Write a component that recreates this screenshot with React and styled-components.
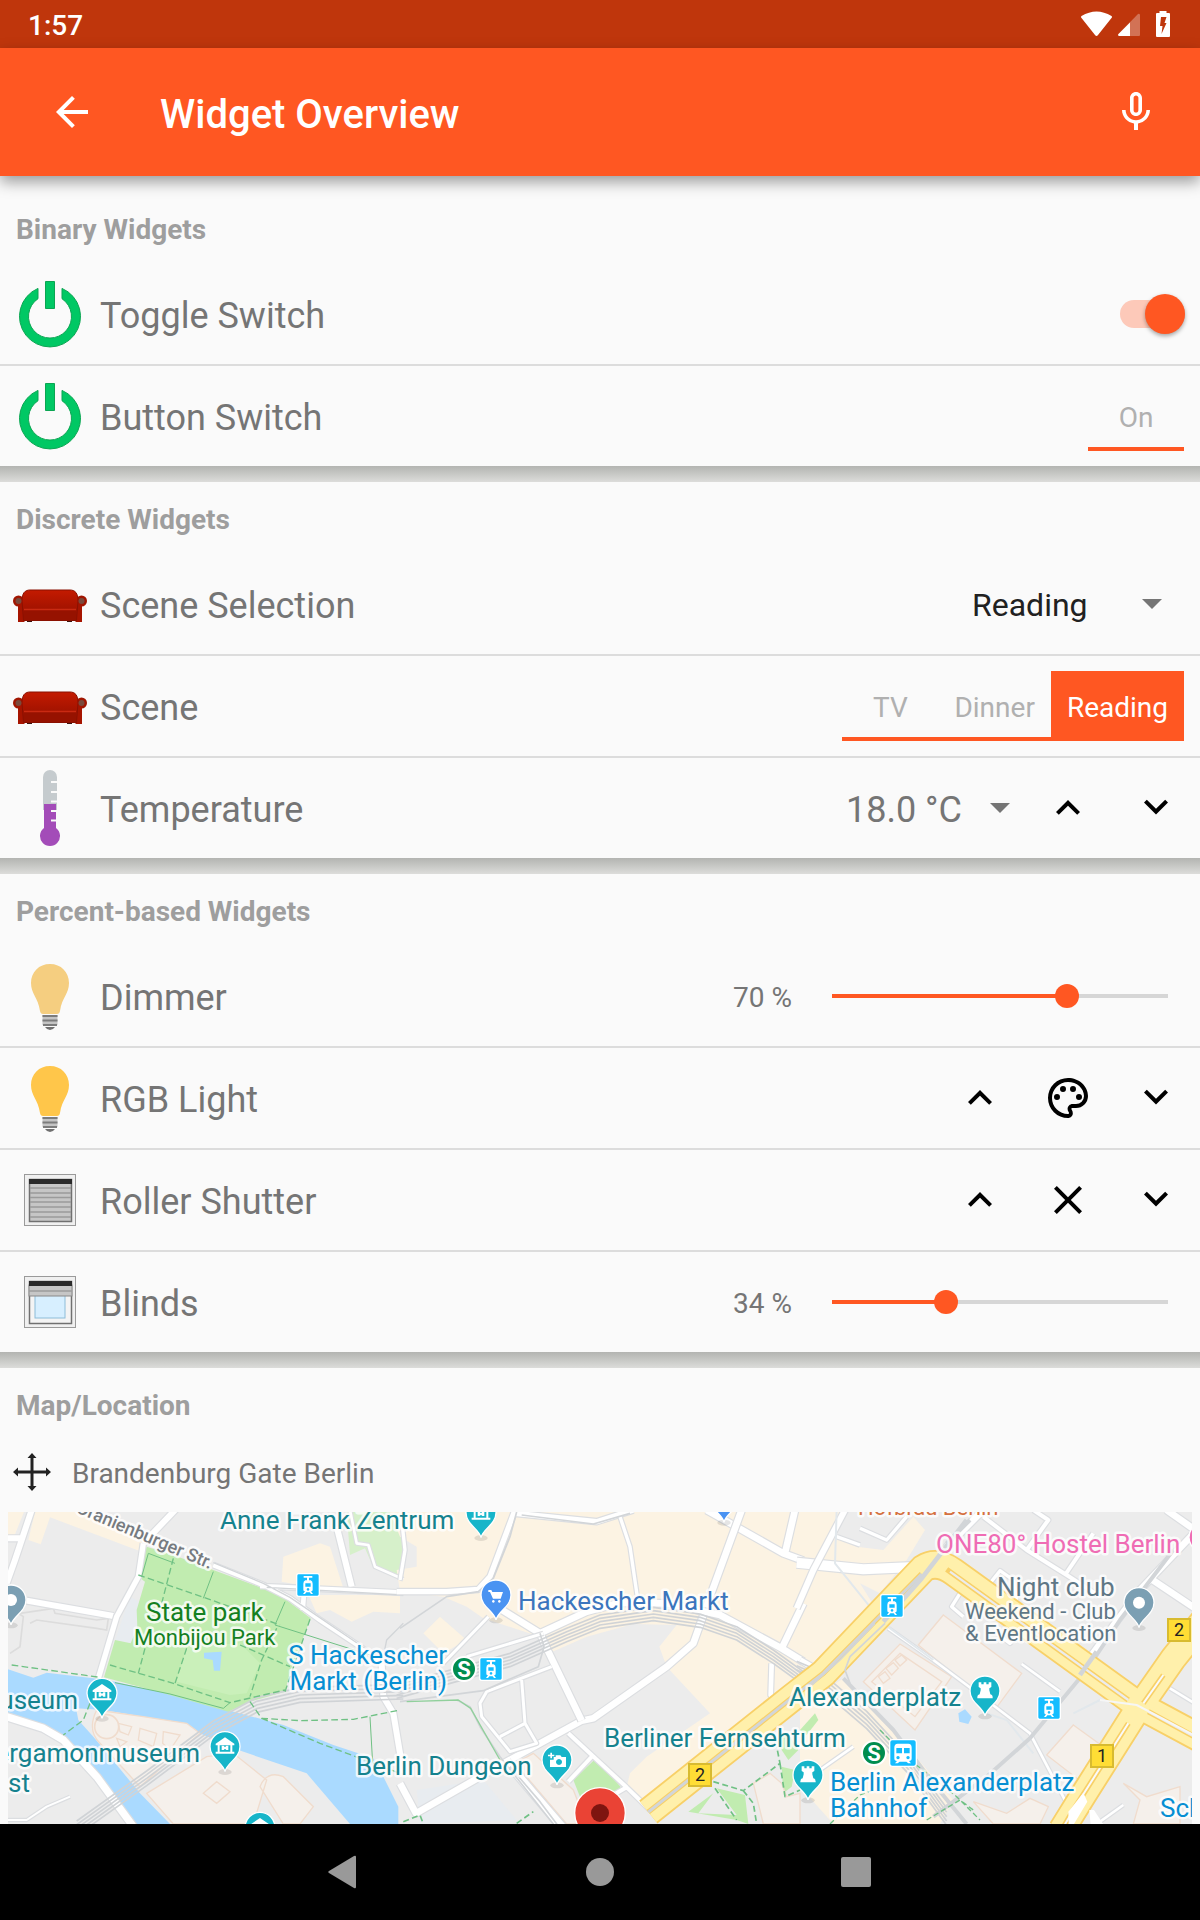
import React, { useState } from "react";
import styled, { createGlobalStyle } from "styled-components";

const accent = "#ff5722";

const GlobalStyle = createGlobalStyle`
  *, *::before, *::after { box-sizing: border-box; }
  body {
    margin: 0;
    background: #fafafa;
    font-family: Roboto, "Noto Sans", sans-serif;
    font-size: 28px;
    color: #757575;
  }
  button, input, select { font: inherit; color: inherit; }
  h1, h2, p { margin: 0; }
`;

const Screen = styled.div`
  display: flex;
  flex-direction: column;
  min-height: 100vh;
`;

const StatusBar = styled.div`
  display: flex;
  align-items: center;
  height: 48px;
  padding: 2px 24px 0 28px;
  background: #bf360c;
  color: #fff;
  font-weight: 500;
`;

const StatusIcons = styled.div`
  display: flex;
  align-items: center;
  gap: 4px;
  margin-left: auto;
  svg { display: block; }
`;

const AppBar = styled.header`
  position: relative;
  display: flex;
  align-items: center;
  height: 128px;
  padding: 0 16px;
  background: ${accent};
  color: #fff;
  box-shadow: 0 6px 14px rgba(0, 0, 0, 0.38);
`;

const BarButton = styled.button`
  display: grid;
  place-items: center;
  width: 96px;
  height: 96px;
  margin: 0;
  padding: 0;
  border: 0;
  background: none;
  cursor: pointer;
`;

const BackButton = styled(BarButton)`
  width: 112px;
`;

const Title = styled.h1`
  flex: 1;
  padding: 6px 0 0 32px;
  font-size: 40px;
  font-weight: 500;
  line-height: 48px;
`;

const Content = styled.main`
  flex: 1;
  display: flex;
  flex-direction: column;
  padding-top: 16px;
`;

const Frame = styled.section`
  & + &::before {
    content: "";
    display: block;
    height: 16px;
    background: linear-gradient(#b3b4b1, #dcdcda);
  }
`;

const FrameTitle = styled.h2`
  height: 72px;
  padding: 3px 16px 0;
  font-size: 28px;
  font-weight: 700;
  line-height: 69px;
  color: #9e9e9e;
`;

const Row = styled.div`
  display: flex;
  align-items: center;
  height: 100px;
  padding-left: 10px;
  & + & {
    height: 102px;
    border-top: 2px solid #dcdcdc;
  }
`;

const IconSlot = styled.span`
  display: block;
  width: 80px;
  height: 80px;
  margin-right: 10px;
  svg { display: block; }
`;

const RowLabel = styled.label`
  flex: 1;
  padding-top: 4px;
  font-size: 36px;
  line-height: 44px;
`;

const Controls = styled.div`
  display: flex;
  align-items: center;
  padding-right: ${(p) => (p.$inset ? "16px" : "0")};
`;

const IconButton = styled.button`
  display: grid;
  place-items: center;
  width: 88px;
  height: 88px;
  padding: 0;
  border: 0;
  background: none;
  color: #000;
  cursor: pointer;
`;

const Switch = styled.input`
  appearance: none;
  display: flex;
  align-items: center;
  justify-content: flex-end;
  width: 65px;
  height: 28px;
  margin: 0;
  border-radius: 14px;
  background: #fdc9b9;
  cursor: pointer;
  &::before {
    content: "";
    width: 40px;
    height: 40px;
    border-radius: 50%;
    background: ${accent};
    box-shadow: 0 2px 4px rgba(0, 0, 0, 0.35);
  }
  &:not(:checked) { justify-content: flex-start; background: #bdbdbd; }
  &:not(:checked)::before { background: #f1f1f1; }
`;

const SwitchBox = styled(Controls)`
  padding-right: 15px;
`;

const SegmentGroup = styled.div`
  display: flex;
`;

const Segment = styled.button`
  min-width: 96px;
  height: 70px;
  padding: 6px 16px 0;
  border: 0;
  border-bottom: 4px solid ${accent};
  background: ${(p) => (p.$active ? accent : "transparent")};
  color: ${(p) => (p.$active ? "#fff" : "#b0b0b0")};
  cursor: pointer;
`;

const SelectBox = styled.div`
  display: grid;
  align-items: center;
`;

const Select = styled.select`
  appearance: none;
  grid-area: 1 / 1;
  height: 72px;
  padding: 2px 96px 0 0;
  border: 0;
  background: none;
  font-size: 32px;
  color: #212121;
  cursor: pointer;
`;

const Caret = styled.span`
  width: 20px;
  height: 10px;
  background: #757575;
  clip-path: polygon(0 0, 100% 0, 50% 100%);
`;

const SelectCaret = styled(Caret)`
  grid-area: 1 / 1;
  justify-self: end;
  margin-right: 22px;
  pointer-events: none;
`;

const Setpoint = styled.button`
  display: flex;
  align-items: center;
  gap: 28px;
  padding: 0 14px 0 0;
  border: 0;
  background: none;
  font-size: 36px;
  line-height: 44px;
  cursor: pointer;
`;

const SetpointValue = styled.span`
  padding-top: 4px;
`;

const Percent = styled.output`
  padding: 3px 28px 0 0;
  line-height: 36px;
`;

const Range = styled.input`
  appearance: none;
  width: 360px;
  height: 48px;
  margin: 0 20px 0 0;
  background:
    linear-gradient(${accent}, ${accent}) 12px 50% / calc((100% - 24px) * var(--fill)) 4px no-repeat,
    linear-gradient(#d6d6d6, #d6d6d6) 12px 50% / calc(100% - 24px) 4px no-repeat;
  cursor: pointer;
  &::-webkit-slider-thumb {
    appearance: none;
    width: 24px;
    height: 24px;
    border-radius: 50%;
    background: ${accent};
  }
`;

const MapHead = styled.div`
  display: flex;
  align-items: center;
  gap: 20px;
  height: 72px;
  padding: 0 12px 8px;
  svg { display: block; }
`;

const MapCaption = styled.p`
  padding-top: 3px;
  line-height: 36px;
`;

const MapFrame = styled.div`
  height: 312px;
  margin: 0 8px;
  overflow: hidden;
  svg { display: block; width: 100%; height: 100%; }
  text { font-family: Roboto, "Noto Sans", sans-serif; }
`;

const NavBar = styled.nav`
  display: flex;
  justify-content: center;
  height: 96px;
  background: #000;
`;

const NavButton = styled.button`
  display: grid;
  place-items: center;
  width: 256px;
  padding: 0;
  border: 0;
  background: none;
  color: #999;
  cursor: pointer;
`;

/* ---------- glyphs ---------- */

const Glyph = ({ d, size = 48 }) => (
  <svg width={size} height={size} viewBox="0 0 24 24" fill="currentColor" aria-hidden="true">
    <path d={d} />
  </svg>
);

const paths = {
  back: "M20 11H7.83l5.59-5.59L12 4l-8 8 8 8 1.41-1.41L7.83 13H20v-2z",
  mic: "M12 14c1.66 0 3-1.34 3-3V5c0-1.66-1.34-3-3-3S9 3.34 9 5v6c0 1.66 1.34 3 3 3zm-1.2-9.1c0-.66.54-1.2 1.2-1.2s1.2.54 1.2 1.2l-.01 6.2c0 .66-.53 1.2-1.19 1.2s-1.2-.54-1.2-1.2V4.9zM17.2 11c0 2.9-2.4 5.1-5.2 5.1S6.8 13.9 6.8 11H5c0 3.41 2.72 6.23 6 6.72V21h2v-3.28c3.28-.48 6-3.3 6-6.72h-1.8z",
  up: "M7.41 15.41L12 10.83l4.59 4.58L18 14l-6-6-6 6z",
  down: "M7.41 7.84L12 12.42l4.59-4.58L18 9.25l-6 6-6-6z",
  close: "M19 6.41L17.59 5 12 10.59 6.41 5 5 6.41 10.59 12 5 17.59 6.41 19 12 13.41 17.59 19 19 17.59 13.41 12z",
  palette:
    "M12 22A10 10 0 0 1 2 12 10 10 0 0 1 12 2c5.5 0 10 4 10 9a6 6 0 0 1-6 6h-1.8c-.3 0-.5.2-.5.5 0 .1.1.2.1.3.4.5.6 1.1.6 1.7.1 1.4-1 2.5-2.4 2.5m0-18a8 8 0 0 0-8 8 8 8 0 0 0 8 8c.3 0 .5-.2.5-.5 0-.2-.1-.3-.1-.4-.4-.5-.6-1-.6-1.6 0-1.4 1.1-2.5 2.5-2.5H16a4 4 0 0 0 4-4c0-3.9-3.6-7-8-7M6.5 10a1.5 1.5 0 1 1 0 3 1.5 1.5 0 0 1 0-3m3-4a1.5 1.5 0 1 1 0 3 1.5 1.5 0 0 1 0-3m5 0a1.5 1.5 0 1 1 0 3 1.5 1.5 0 0 1 0-3m3 4a1.5 1.5 0 1 1 0 3 1.5 1.5 0 0 1 0-3",
};

const Art = ({ children }) => (
  <svg width="80" height="80" viewBox="0 0 80 80" aria-hidden="true">{children}</svg>
);

const PowerArt = () => (
  <Art>
    <g fill="#00c864" stroke="#0ba552" strokeWidth="1">
      <path d="M28 14.400A30.500 30.500 0 1 0 52 14.400V24.700A21.500 21.500 0 1 1 28 24.700Z" />
      <path d="M35.500 7.500H44.500V34.500H35.500Z" />
    </g>
  </Art>
);

const SofaArt = () => (
  <Art>
    <defs>
      <linearGradient id="sofaBack" x1="0" y1="0" x2="0" y2="1">
        <stop offset="0" stopColor="#c41a00" />
        <stop offset="1" stopColor="#8f0f00" />
      </linearGradient>
    </defs>
    <path d="M17 54h5v4h-5zM57 54h5v4h-5z" fill="#3a1410" />
    <circle cx="8.500" cy="37" r="5.500" fill="#a01500" />
    <circle cx="71.500" cy="37" r="5.500" fill="#a01500" />
    <path d="M8 36h6.500v22H8zM65.500 36h6.500v22h-6.500z" fill="#a61400" />
    <path d="M12 37C12 29 15 26 20 26H60C65 26 68 29 68 37L66.500 56.500H13.500Z" fill="url(#sofaBack)" stroke="#8a1000" strokeWidth="1" />
    <path d="M14 46V56H66V46Z" fill="#961200" />
    <path d="M14 45.500H66" stroke="#c92a12" strokeWidth="1.500" />
    <circle cx="8.500" cy="37" r="3" fill="#7a4a3c" />
    <circle cx="71.500" cy="37" r="3" fill="#7a4a3c" />
  </Art>
);

const ThermometerArt = () => (
  <Art>
    <path d="M33 42V9a7 7 0 0 1 14 0V42Z" fill="#c5cbce" />
    <path d="M34 36H46V60A10 10 0 1 1 34 60Z" fill="#a34cb8" />
    <path d="M41 14H48M41 24H48M41 33.500H48M41 43H48M41 52.500H48" stroke="#fafafa" strokeWidth="2" />
  </Art>
);

const BulbArt = ({ color }) => (
  <Art>
    <path d="M40 8C51 8 59 16 59 27C59 38 52 41 50 55Q49.500 58 47 58H33Q30.500 58 30 55C28 41 21 38 21 27C21 16 29 8 40 8Z" fill={color} />
    <path d="M32.500 59H47.500V69H32.500Z" fill="#c4c4c4" />
    <path d="M32.500 60H47.500M32.500 64.500H47.500M33 69H47" stroke="#7c7c7c" strokeWidth="2" />
    <path d="M35 71H45Q43 74 40 74T35 71Z" fill="#707070" />
  </Art>
);

const WindowArt = ({ open }) => (
  <Art>
    <rect x="14.500" y="14.500" width="51" height="51" fill="#f0f0f0" stroke="#9a9a9a" />
    <rect x="19.500" y="19.500" width="42" height="42" fill={open ? "#f4f4f4" : "#c6c6c6"} stroke="#707070" strokeWidth="1.500" />
    {open && <rect x="25" y="27" width="30" height="29" fill="#d7efff" stroke="#8cbcd8" />}
    {open && <rect x="19" y="23" width="43" height="11" fill="#c6c6c6" stroke="#888" />}
    <rect x="19" y="19" width="43" height="5" fill="#2a2a2a" />
    <path
      d={open ? "M19 29H62" : "M20 28H61M20 33H61M20 37.500H61M20 42H61M20 47H61M20 52H61M20 57H61"}
      stroke="#9b9b9b"
      strokeWidth="1.500"
    />
  </Art>
);

/* ---------- map ---------- */

const Road = ({ d, w = 18 }) => (
  <>
    <path d={d} stroke="#dcdee1" strokeWidth={w + 7} />
    <path d={d} stroke="#fff" strokeWidth={w} />
  </>
);

const Rail = ({ d, n = 3, gap = 12 }) =>
  Array.from({ length: n }, (_, i) => (
    <path key={i} d={d} stroke="#d0d3d6" strokeWidth="5" transform={`translate(0 ${(i - (n - 1) / 2) * gap})`} />
  ));

const PinGlyphs = {
  museum: (
    <>
      <path d="M-28 -9L0 -28 28 -9V-4H-28ZM-28 15H28V21H-28Z" fill="#fff" />
      <path d="M-19 -5V17M19 -5V17" stroke="#fff" strokeWidth="6" />
      <path d="M-10 10V-3H-4L0 2 4 -3H10V10H4L0 6 -4 10Z" fill="#fff" />
    </>
  ),
  cart: (
    <path d="M-23 -15h9l3 6h32l-7 20h-23l-9 -20h-5zM-8 15a4 4 0 1 0 .1 0M10 15a4 4 0 1 0 .1 0" fill="#fff" />
  ),
  camera: (
    <path fillRule="evenodd" d="M-4 -14h14l4 5h13v30h-48v-22h11v-8h6zM6 -3a9 9 0 1 0 .1 0M-27 -16h7v-6h5v6h7v5h-7v6h-5v-6h-7z" fill="#fff" />
  ),
  tower: <path d="M-19 -26h8v6h7v-6h8v6h7v-6h8v14l-6 4v6l3 12q8 2 7 12h-46q-1 -10 7 -12l3 -12v-6l-6 -4z" fill="#fff" />,
  dot: <circle r="18" fill="#fff" />,
};

const Pin = ({ x, y, color = "#17b5c9", glyph = "museum" }) => (
  <g transform={`translate(${x} ${y})`}>
    <ellipse cx="0" cy="76" rx="20" ry="9" fill="#000" opacity=".1" />
    <path d="M0 75C-5 48-45 36-45 0A45 45 0 1 1 45 0C45 36 5 48 0 75Z" fill={color} stroke="#fff" strokeWidth="4" />
    {PinGlyphs[glyph]}
  </g>
);

const Tram = ({ x, y }) => (
  <g transform={`translate(${x} ${y})`}>
    <rect x="-34" y="-34" width="68" height="68" rx="6" fill="#14bdff" stroke="#fff" strokeWidth="4" />
    <path
      fillRule="evenodd"
      d="M-13 -27H13V-22H3V-14H8Q14 -12 14 -4V14Q14 19 9 19L15 27H9L5 22H-5L-9 27H-15L-9 19Q-14 19 -14 14V-4Q-14 -12 -8 -14H-3V-22H-13ZM-8 -5V5H8V-5ZM0 9a4 4 0 1 0 .1 0"
      fill="#fff"
    />
  </g>
);

const Park = (props) => <path fill="#c1ecb0" {...props} />;
const Shop = (props) => <path fill="#fcf3e3" {...props} />;
const Plot = (props) => <path fill="#f5f0eb" stroke="#f0dccd" strokeWidth="4" {...props} />;

const Label = ({ x, y, size = 26, color = "#15828e", end, children, ...rest }) => (
  <text
    x={x}
    y={y}
    fontSize={size}
    fill={color}
    textAnchor={end ? "end" : "start"}
    stroke="#fff"
    strokeOpacity=".8"
    strokeWidth="5"
    strokeLinejoin="round"
    paintOrder="stroke"
    {...rest}
  >
    {children}
  </text>
);

const RouteBadge = ({ x, y, children }) => (
  <g transform={`translate(${x} ${y})`}>
    <rect x="-11" y="-11" width="22" height="22" fill="#ffdd35" stroke="#d8bb30" strokeWidth="2" />
    <text y="6" fontSize="18" fill="#222" textAnchor="middle">{children}</text>
  </g>
);

const SBahn = ({ x, y }) => (
  <g transform={`translate(${x} ${y})`}>
    <circle r="12" fill="#008d4f" stroke="#fff" strokeWidth="2" />
    <text y="8" fontSize="22" fontWeight="700" fill="#fff" textAnchor="middle">S</text>
  </g>
);

const west = "scale(.333333) translate(-24 -396)";
const middle = "scale(.333333) translate(1176 -36)";
const east = "scale(.333333) translate(2376 -36)";

const highwayA = "M-455 936L-20 590L70 520L370 205Q410 180 460 215L1010 612L1220 725";
const highwayB = "M1220 350L1120 475L1005 640L850 885L785 990";

const BerlinMap = () => (
  <svg viewBox="0 0 1184 312" preserveAspectRatio="xMidYMid slice" role="img" aria-label="Map of Berlin">
    <rect width="1184" height="312" fill="#ececec" />

    <g transform={west}>
      <Shop d="M24 396H72L42 470H24ZM105 396H240L435 475 425 515 150 412 122 493 85 480ZM850 530L960 490 990 500 1035 640 845 605ZM925 645H1200V700L1120 695 1055 725 990 690 950 700Z" />
      <Park d="M1040 396H1210V590L1120 562 1095 505 1050 525Z" fill="#d6f0ca" />
      <path d="M440 690L410 660 390 650 345 780 392 790Z" fill="#e8ecf0" />
      <path d="M24 868L100 893 140 878 280 895 345 905 520 945 690 992 850 1035 1000 1095 1120 1135 1150 1190 1195 1280V1332H1050L920 1180 700 1105 590 1055 500 1022 400 1005 310 990 228 985 235 1020 280 1070 330 1130 420 1240 510 1332H400L320 1240 240 1110 180 1060 24 1005Z" fill="#aadaff" />
      <Park d="M440 500L520 525 640 570 790 625 860 660 932 715 872 870 855 935 750 965 685 995 510 945 312 892 345 780 392 790 412 740 410 690 435 605 412 588Z" />
      <path d="M560 800L720 790 780 850 740 940 690 945 530 905Z" fill="#caf0ba" />
      <path d="M612 818L665 815 660 872H642L638 840 612 835Z" fill="#aadaff" />
      <Plot d="M290 990Q260 1050 300 1090L420 1220 600 1060 560 1030 430 1010Z" />
      <Plot d="M440 1240L620 1130 700 1120 800 1200 760 1332H520ZM780 1220Q800 1170 850 1190L940 1280 900 1332H850Z" />
      <Plot d="M355 1030L395 1040 385 1065 360 1055ZM420 1045L470 1060 460 1100 415 1080ZM490 1055L540 1065 510 1110 488 1090ZM350 1075L380 1085 360 1100ZM610 1240L650 1205 690 1235 650 1270Z" />
      <circle cx="320" cy="1040" r="36" fill="#f5f0eb" stroke="#f0dccd" strokeWidth="5" />
      <path d="M40 690L70 710 60 800 30 820M60 700L160 685 165 700 290 720 325 715 320 750 290 745 110 720 90 730" fill="none" stroke="#dcdcdc" strokeWidth="5" />
    </g>

    <g transform={middle}>
      <Shop d="M-30 36H1210V560L980 745 900 800 780 890 740 925 680 860 690 820 740 770 930 640 800 500 778 440 830 375 700 372 560 410 435 465 420 410 250 355 200 320 130 290 0 275-10 210 50 200V140L0 110Z" />
      <path d="M0 340H120L230 380 340 440 130 500 0 560Z" fill="#ececec" />
      <Shop d="M70 400L120 350 200 420 130 460Z" />
      <Park d="M520 840L585 778 662 860 640 890 540 890Z" />
      <Plot d="M345 790L400 760 520 870 560 972H500Z" />
      <path d="M50 870L250 840 350 960 60 972Z" fill="#e8ecf0" />
      <Park d="M865 935L940 880 895 940 1010 945 950 865 1035 885 1045 972 1010 960ZM1125 720L1165 700 1195 750 1165 780ZM1145 800L1185 810 1175 860 1150 880Z" />
      <Plot d="M1060 850L1110 820 1145 850 1160 890 1200 880V972H1090Z" />
    </g>

    <g transform={east}>
      <Shop d="M-30 36H130L100 110 170 140 250 150 340 50 375 90 320 180 240 280 180 250 230 330 150 440 0 600Z" />
      <Shop d="M0 620L130 535 200 600 460 900 420 972H100L0 860Z" />
      <Plot d="M430 345L665 520 590 622 520 570 355 435ZM300 432L455 530 345 690 190 545Z" />
      <Plot d="M300 460L425 545 345 650 215 545ZM820 675L910 740 850 850 740 765ZM520 905L620 940 690 895 745 920 720 972H580ZM970 850L1040 890 1140 860V972H1000L1020 900Z" />
      <path d="M235 530L255 515 270 535 250 550ZM258 505L280 488 295 505 275 525ZM285 480L305 465 320 480 300 498Z" fill="none" stroke="#f0dccd" strokeWidth="4" />
      <path d="M475 640L495 628 515 650 505 672 478 665Z" fill="#aadaff" />
      <Park d="M0 690L45 640 55 660 20 705Z" />
    </g>

    <g fill="none" strokeLinejoin="round">
      <g transform={west}>
        <Road d="M95 390L45 540 20 610M20 475H60M80 662L340 708M430 490L530 385M1010 440L1055 620" />
        <Road d="M430 490L415 590 350 710 295 895" w={16} />
        <Road d="M20 1010L130 1045 190 1080 290 1190 400 1340" w={22} />
        <Road d="M640 555L790 615 870 655 960 720 1080 800 1150 850M780 618L1210 638M912 640L908 690" w={14} />
        <Road d="M1050 390L1070 490 1105 495 1125 560 1210 598" w={8} />
        <Road d="M1145 850L1150 950 1180 1000 1210 1180" w={18} />
        <Road d="M24 1320L80 1320 140 1280 210 1250" w={6} />
        <path d="M640 548L790 610 870 652 1080 795 1150 840M800 622L1210 645M1150 830L1160 780 1210 730" stroke="#d2d5d8" strokeWidth="4" />
        <Rail d="M230 1345L440 1195 640 1045 770 975 900 945 1210 935" n={5} gap={11} />
        <g stroke="#6fc184" strokeWidth="4">
          <path d="M415 585L620 655 840 735M330 855L520 910 690 968 855 930M520 535L485 670M435 805L415 880M560 805L525 910M930 718L855 935M830 745L785 840 750 950M720 795L870 860M35 855L300 892M270 970L250 1020 190 1065M750 965L785 1015 900 1022 1060 1018 1200 990M785 1015L960 1090 1200 1180" strokeDasharray="20 10" />
          <path d="M445 520L425 590M445 520L525 550M640 575L610 655M855 665L825 735L1110 825M345 908L510 942 670 985 690 968M1110 1010L1118 1150" strokeWidth="3" />
        </g>
      </g>

      <g transform={middle}>
        <Road d="M345 30L270 230 235 268 140 275-10 275M345 40L590 65 700 30" w={16} />
        <Road d="M5 60L15 150 0 240M660 50L690 140 712 290" w={10} />
        <Road d="M920 30L1150 160 1210 182M1185 30L1155 160" w={20} />
        <Road d="M1025 30L930 290 880 430 800 500 580 655 545 662 320 785 48 940 0 850" w={20} />
        <Road d="M290 320L420 400 445 455 545 662M420 400L560 335 660 308 800 310 960 345 1145 445 1210 485M1210 310L1145 445" w={20} />
        <Road d="M265 350L130 490M200 470L430 400M455 500L260 575 240 610 245 650 330 755 410 730 375 670 300 710M365 540L375 670" w={9} />
        <Road d="M1115 490L1112 585 1130 612" w={14} />
        <Road d="M505 700L680 862 750 930M580 765L505 845M680 862L640 885" w={12} />
        <Road d="M320 785L400 880 490 985" w={24} />
        <path d="M350 36L330 110 280 235 235 275 140 290 0 385M420 400L432 440 415 500 250 572 0 605M170 600L210 620 240 680 300 770 470 985M330 800L420 905 480 985M365 45L580 72 690 40" stroke="#d2d5d8" strokeWidth="5" />
        <path d="M20 605L175 600 212 625 300 780" stroke="#91d09c" strokeWidth="4" />
        <Rail d="M-10 575L330 480 500 405 600 365 760 342 900 362 1010 400 1120 470 1210 535" n={5} gap={10} />
        <path d="M940 845L1030 872 1140 790 1130 740M945 865L1010 960M1030 872L1060 910 1070 972M1140 790L1155 890 1200 870M10 965L60 945 70 972M350 970L400 935" stroke="#6fc184" strokeWidth="5" strokeDasharray="18 10" />
      </g>

      <g transform={east}>
        <Road d="M-10 188L190 208 360 200" w={30} />
        <Road d="M-10 325L40 210 135 30M0 480L60 515" w={18} />
        <Road d="M550 30L450 130 400 190M1210 70L1020 270 960 350 850 500M1100 30L1185 90M1050 235L1200 335" w={20} />
        <Road d="M550 50L680 150 800 225 900 290M680 150L745 60 700 30M795 225L880 100" w={12} />
        <Road d="M110 110L180 135M180 85L260 120 320 50M570 250L600 212 640 240 650 300M480 280L455 320 490 350M590 400L630 430 660 400" w={10} />
        <Road d="M265 385L400 480 500 555 690 700 800 910M665 492L780 575M60 810L160 740M1110 565L1200 620M890 972L970 915" w={8} />
        <path d="M110 30L105 190 250 370 400 480M560 640L620 660 700 760 M820 640L900 600 970 610" stroke="#e2e8ec" strokeWidth="6" />
        <Rail d="M-10 510L60 540 200 660 330 800 440 950" n={5} gap={13} />
        <path d="M130 535L280 690 400 850 500 972M690 715L560 830 400 950M510 60L440 130M1120 150L960 360 860 510 690 715" stroke="#d2d5d8" strokeWidth="12" />
        <path d="M240 690L330 780 470 890 540 960M90 972L180 885 220 870M380 960L480 900 520 930" stroke="#6fc184" strokeWidth="4" strokeDasharray="16 9" />
        <g strokeLinejoin="miter">
          <path d={highwayA} stroke="#f8d068" strokeWidth="88" />
          <path d={highwayB} stroke="#f8d068" strokeWidth="84" />
          <path d={highwayA} stroke="#fff0ab" strokeWidth="77" />
          <path d={highwayB} stroke="#fff0ab" strokeWidth="73" />
          <path d="M-455 936L-20 590L70 520L365 222M440 208L985 600M1045 635L1220 730M1090 525L1030 610M985 670L820 930 785 990" stroke="#f8d068" strokeWidth="16" />
          <path d="M-455 936L-20 590L70 520L365 222" stroke="#d2d5d8" strokeWidth="9" />
          <path d="M450 215L985 600M1045 635L1220 730" stroke="#ececec" strokeWidth="7" />
          <path d="M1090 525L1030 610M985 670L820 930 785 990" stroke="#fafafa" strokeWidth="6" />
        </g>
        <path d="M250 365L365 235 500 60M840 525L890 455" stroke="#d2d5d8" strokeWidth="14" />
        <path d="M805 935L850 878 862 905 822 972H806ZM868 930L882 930 912 976H872Z" fill="#fff" />
        <path d="M900 600L1010 615 1200 715" stroke="#f6f6f6" strokeWidth="6" />
        <path d="M255 370L150 470 135 510 150 550M225 370L120 480 30 560" stroke="#d2d5d8" strokeWidth="5" />
      </g>
    </g>

    <Label x="67" y="0" size={18} color="#767b80" fontWeight="500" transform="rotate(23 67 0)">Oranienburger Str.</Label>
    <Label x="212" y="17">Anne Frank Zentrum</Label>
    <Label x="138" y="109" color="#14801f">State park</Label>
    <Label x="126" y="133" size={22} color="#14801f">Monbijou Park</Label>
    <Label x="439" y="152" color="#078fd3" end>S Hackescher</Label>
    <Label x="439" y="178" color="#078fd3" end>Markt (Berlin)</Label>
    <Label x="70" y="197" end>useum</Label>
    <Label x="192" y="250" end>ergamonmuseum</Label>
    <Label x="0" y="280">st</Label>
    <Label x="348" y="263">Berlin Dungeon</Label>
    <Label x="510" y="98" color="#3b75bd">Hackescher Markt</Label>
    <Label x="596" y="235">Berliner Fernsehturm</Label>
    <Label x="781" y="194">Alexanderplatz</Label>
    <Label x="850" y="3" size={22} color="#d5713f">Hofbräu Berlin</Label>
    <Label x="928" y="41" color="#ef6cb4">ONE80° Hostel Berlin</Label>
    <Label x="989" y="84" color="#5f7785">Night club</Label>
    <Label x="957" y="107" size={22} color="#5f7785">Weekend - Club</Label>
    <Label x="957" y="129" size={22} color="#5f7785">&amp; Eventlocation</Label>
    <Label x="822" y="279" color="#078fd3">Berlin Alexanderplatz</Label>
    <Label x="822" y="305" color="#078fd3">Bahnhof</Label>
    <Label x="1152" y="305" color="#078fd3">Sch</Label>

    <g transform={west}>
      <Pin x={33} y={660} color="#7b9fb3" glyph="dot" />
      <Pin x={306} y={940} />
      <Pin x={675} y={1100} />
      <Pin x={780} y={1342} />
      <Tram x={924} y={615} />
    </g>
    <g transform={middle}>
      <Pin x={243} y={38} />
      <Pin x={288} y={285} color="#4a93f2" glyph="cart" />
      <Pin x={471} y={780} glyph="camera" />
      <Pin x={972} y={-8} color="#4a93f2" glyph="cart" />
      <Tram x={273} y={507} />
      <circle cx="600" cy="939" r="76" fill="#ea4335" stroke="#fff" strokeWidth="4" />
      <circle cx="600" cy="939" r="27" fill="#7f1510" />
    </g>
    <g transform={east}>
      <Pin x={555} y={573} glyph="tower" />
      <Pin x={24} y={825} glyph="tower" />
      <Pin x={1017} y={308} color="#7b9fb3" glyph="dot" />
      <Tram x={276} y={318} />
      <Tram x={747} y={624} />
      <circle cx="1212" cy="112" r="45" fill="#ef6cb4" stroke="#fff" strokeWidth="4" />
      <g transform="translate(309 759)">
        <rect x="-40" y="-40" width="80" height="80" rx="8" fill="#14bdff" stroke="#fff" strokeWidth="4" />
        <path fillRule="evenodd" d="M-16 -28H16Q26 -28 26 -16V16Q26 24 18 24L24 31H16L10 26H-10L-16 31H-24L-18 24Q-26 24 -26 16V-16Q-26 -28 -16 -28ZM-20 -15V1H-3V-15ZM3 -15V1H20V-15ZM-15 9a5 5 0 1 0 .1 0M15 9a5 5 0 1 0 .1 0" fill="#fff" />
      </g>
    </g>
    <SBahn x="456" y="157" />
    <SBahn x="866" y="241" />
    <RouteBadge x="692" y="263">2</RouteBadge>
    <RouteBadge x="1171" y="118">2</RouteBadge>
    <RouteBadge x="1094" y="244">1</RouteBadge>
  </svg>
);

/* ---------- widgets ---------- */

const UpButton = () => (
  <IconButton aria-label="Up"><Glyph d={paths.up} /></IconButton>
);
const DownButton = () => (
  <IconButton aria-label="Down"><Glyph d={paths.down} /></IconButton>
);

const Widget = ({ icon, label, htmlFor, children }) => (
  <Row>
    <IconSlot>{icon}</IconSlot>
    <RowLabel as={htmlFor ? "label" : "span"} htmlFor={htmlFor}>{label}</RowLabel>
    {children}
  </Row>
);

const SliderWidget = ({ icon, label, id, initial }) => {
  const [value, setValue] = useState(initial);
  return (
    <Widget icon={icon} label={label} htmlFor={id}>
      <Controls>
        <Percent htmlFor={id}>{value} %</Percent>
        <Range
          id={id}
          type="range"
          min="0"
          max="100"
          value={value}
          onChange={(e) => setValue(Number(e.target.value))}
          style={{ "--fill": value / 100 }}
        />
      </Controls>
    </Widget>
  );
};

const scenes = ["TV", "Dinner", "Reading"];

export default function App() {
  const [scene, setScene] = useState("Reading");
  return (
    <Screen>
      <GlobalStyle />
      <StatusBar>
        <span>1:57</span>
        <StatusIcons>
          <svg width="34" height="28" viewBox="0 0 34 28" fill="#fff" aria-hidden="true">
            <path d="M1.500 5Q16.500 -4 31.500 5Q32.500 6 31.500 7L18 24Q16.500 26 15 24L1.500 7Q.5 6 1.500 5Z" />
          </svg>
          <svg width="22" height="28" viewBox="0 0 22 28" fill="#fff" aria-hidden="true">
            <path d="M22 4V24Q22 25 21 25H1Q-.5 24.500.5 23L20 3Q21.500 2 22 4Z" opacity=".3" />
            <path d="M12 11.500V25H1Q-.5 24.500.5 23Z" />
          </svg>
          <svg width="32" height="28" viewBox="0 0 32 28" fill="#fff" aria-hidden="true">
            <path fillRule="evenodd" d="M15.500 0H22.500V2H25Q26 2 26 3V25Q26 26 25 26H13Q12 26 12 25V3Q12 2 13 2H15.500ZM17 6L16 15H18.500L17.500 23L22.500 12H20.500L22.500 6Z" />
          </svg>
        </StatusIcons>
      </StatusBar>
      <AppBar>
        <BackButton aria-label="Back"><Glyph d={paths.back} /></BackButton>
        <Title>Widget Overview</Title>
        <BarButton aria-label="Voice input"><Glyph d={paths.mic} /></BarButton>
      </AppBar>

      <Content>
        <Frame>
          <FrameTitle>Binary Widgets</FrameTitle>
          <Widget icon={<PowerArt />} label="Toggle Switch" htmlFor="toggle">
            <SwitchBox><Switch id="toggle" type="checkbox" role="switch" defaultChecked /></SwitchBox>
          </Widget>
          <Widget icon={<PowerArt />} label="Button Switch">
            <Controls $inset><Segment>On</Segment></Controls>
          </Widget>
        </Frame>

        <Frame>
          <FrameTitle>Discrete Widgets</FrameTitle>
          <Widget icon={<SofaArt />} label="Scene Selection" htmlFor="scene">
            <Controls $inset>
              <SelectBox>
                <Select id="scene" value={scene} onChange={(e) => setScene(e.target.value)}>
                  {scenes.map((s) => <option key={s}>{s}</option>)}
                </Select>
                <SelectCaret />
              </SelectBox>
            </Controls>
          </Widget>
          <Widget icon={<SofaArt />} label="Scene">
            <Controls $inset>
              <SegmentGroup role="group" aria-label="Scene">
                {scenes.map((s) => (
                  <Segment key={s} $active={s === scene} aria-pressed={s === scene} onClick={() => setScene(s)}>{s}</Segment>
                ))}
              </SegmentGroup>
            </Controls>
          </Widget>
          <Widget icon={<ThermometerArt />} label="Temperature">
            <Controls>
              <Setpoint><SetpointValue>18.0 °C</SetpointValue><Caret /></Setpoint>
              <UpButton />
              <DownButton />
            </Controls>
          </Widget>
        </Frame>

        <Frame>
          <FrameTitle>Percent-based Widgets</FrameTitle>
          <SliderWidget icon={<BulbArt color="#f5ce80" />} label="Dimmer" id="dimmer" initial={70} />
          <Widget icon={<BulbArt color="#ffc64a" />} label="RGB Light">
            <Controls>
              <UpButton />
              <IconButton aria-label="Pick colour"><Glyph d={paths.palette} /></IconButton>
              <DownButton />
            </Controls>
          </Widget>
          <Widget icon={<WindowArt />} label="Roller Shutter">
            <Controls>
              <UpButton />
              <IconButton aria-label="Stop"><Glyph d={paths.close} /></IconButton>
              <DownButton />
            </Controls>
          </Widget>
          <SliderWidget icon={<WindowArt open />} label="Blinds" id="blinds" initial={34} />
        </Frame>

        <Frame>
          <FrameTitle>Map/Location</FrameTitle>
          <MapHead>
            <svg width="40" height="40" viewBox="0 0 40 40" aria-hidden="true">
              <path d="M20 4V36M4 20H36" stroke="#222" strokeWidth="3" />
              <path d="M20 1L24.500 6H15.500ZM20 39L24.500 34H15.500ZM1 20L6 15.500V24.500ZM39 20L34 15.500V24.500Z" fill="#222" />
            </svg>
            <MapCaption>Brandenburg Gate Berlin</MapCaption>
          </MapHead>
          <MapFrame><BerlinMap /></MapFrame>
        </Frame>
      </Content>

      <NavBar>
        <NavButton aria-label="Back">
          <svg width="32" height="36" viewBox="0 0 32 36" fill="currentColor" aria-hidden="true">
            <path d="M1 17Q-.5 18 1 19L26 34Q28 35 28 33V3Q28 1 26 2Z" />
          </svg>
        </NavButton>
        <NavButton aria-label="Home">
          <svg width="28" height="28" viewBox="0 0 28 28" fill="currentColor" aria-hidden="true"><circle cx="14" cy="14" r="14" /></svg>
        </NavButton>
        <NavButton aria-label="Recent apps">
          <svg width="30" height="30" viewBox="0 0 30 30" fill="currentColor" aria-hidden="true"><rect width="30" height="30" rx="2" /></svg>
        </NavButton>
      </NavBar>
    </Screen>
  );
}
